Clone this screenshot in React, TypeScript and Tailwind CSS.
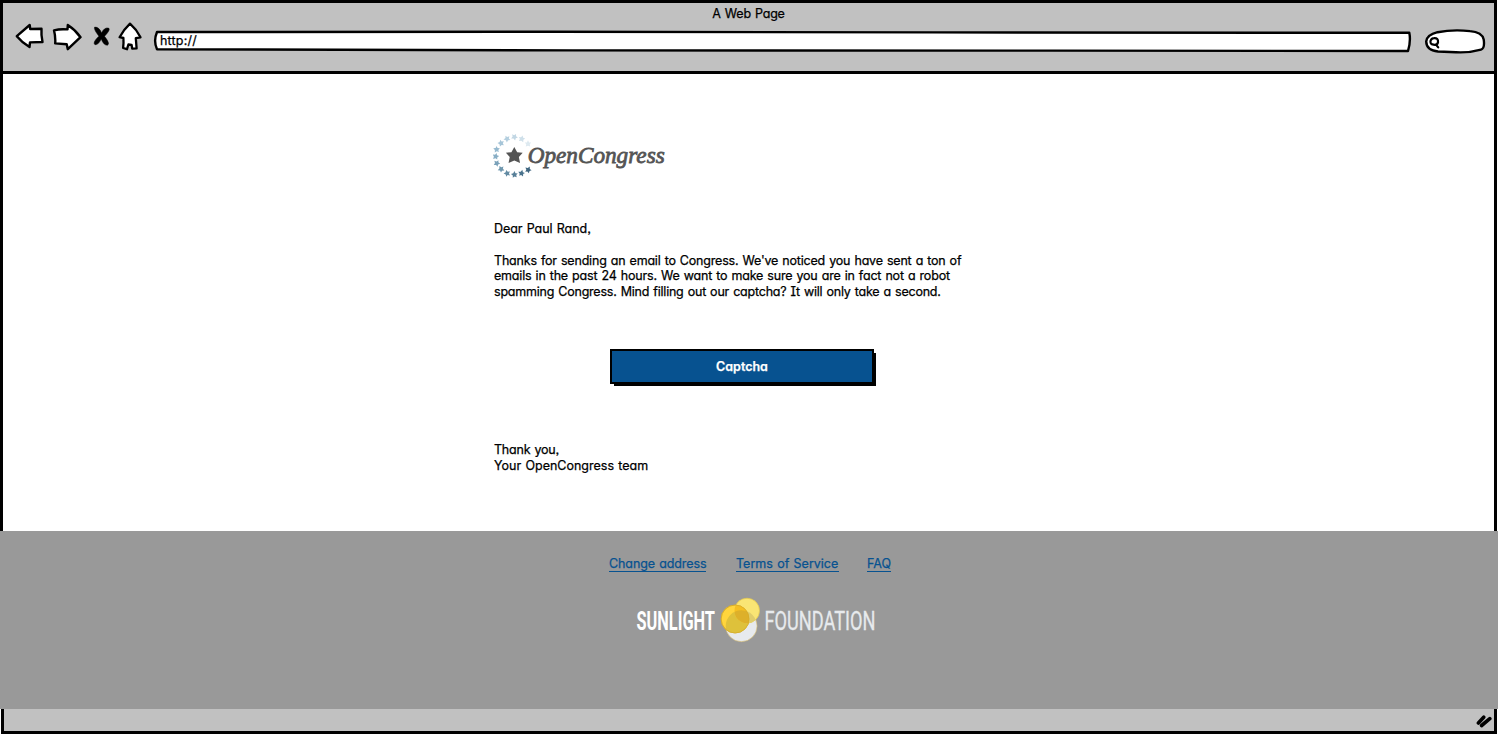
import type { ReactNode } from "react";

const sketchFont =
  "font-['Inter',sans-serif] [-webkit-text-stroke:0.25px_currentColor] [font-feature-settings:'cv11','ss03','cv08']";

function BackIcon() {
  return (
    <svg width="29" height="27" viewBox="0 0 29 27" fill="white" stroke="black" strokeWidth="2.4" strokeLinejoin="round">
      <path d="M1.8 13.2 L14.7 2 L15.2 6 L26.5 5.8 Q26 12 27.5 19 L15 19.4 L14.5 24 Q7 19.5 1.8 13.2Z" />
    </svg>
  );
}

function ForwardIcon() {
  return (
    <svg width="30" height="29" viewBox="0 0 30 29" fill="white" stroke="black" strokeWidth="2.4" strokeLinejoin="round">
      <path d="M2 7.3 Q8 5.7 15.5 6.4 L15.8 2 Q23.5 7 28.5 14.2 L15.8 26.2 L14.7 21.2 L3.2 20.4 Q3.7 14 2 7.3Z" />
    </svg>
  );
}

function StopIcon() {
  return (
    <svg width="18" height="21" viewBox="0 0 18 21" fill="black" stroke="black" strokeWidth=".5">
      <path d="M1.7 1.1 Q6.3 1 8.6 7 Q11 1.3 15.5 2 Q18.1 3.5 11.5 10.3 Q17.6 18 14.4 19.2 Q10.8 19.5 8.2 13 Q5.5 19 2 18.7 Q-0.9 16.5 5.9 10.2 Q0.2 2.8 1.7 1.1Z" />
    </svg>
  );
}

function HomeIcon() {
  return (
    <svg width="24" height="29" viewBox="0 0 24 29" fill="white" stroke="black" strokeWidth="2.3" strokeLinejoin="round">
      <path d="M12 1.7 Q5.4 8 1.6 15.2 L5.4 16 Q5.8 21 5.1 26 L9 27.2 L10.4 22.5 L13.6 22.8 L14.2 26.7 L18.6 26.3 L17.8 16.1 L22.5 15.3 Q18.4 7.3 12 1.7Z" />
    </svg>
  );
}

function AddressField() {
  return (
    <div className="relative h-[23px] w-[1260px]">
      <svg className="absolute inset-0" width="1260" height="23" viewBox="0 0 1260 23" fill="white" stroke="black" strokeWidth="2.4" strokeLinejoin="round">
        <path d="M4 2 L400 1.7 L780 2.4 L1256.3 2.8 Q1258 11 1255 21 L900 20.6 L420 20.4 L4 19.2 Q0.2 11 4 2Z" />
      </svg>
      <span className={`absolute left-[7px] top-[3px] text-[12.5px] leading-4 tracking-[0.2px] ${sketchFont}`}>http://</span>
    </div>
  );
}

function SearchField() {
  return (
    <svg width="62" height="27" viewBox="0 0 62 27" fill="white" stroke="black" strokeWidth="2.4" strokeLinejoin="round" strokeLinecap="round">
      <path d="M13.5 4.2 Q29 1.2 46 3.1 Q58 4 59.7 11.4 Q61 20.6 57 21.6 Q45 25 32 24.3 L14 23.5 Q2.4 22.2 2.2 13.5 Q3 6.7 13.5 4.2Z" />
      <path d="M10 10.2 Q14.5 9.8 14 14.4 Q13.2 17.4 9.5 16.7 Q5.6 16 6.6 12.6 Q7.7 10.2 10 10.2ZM12.2 16.8 L14.2 19.4" strokeWidth="2.2" />
    </svg>
  );
}

function Chrome() {
  return (
    <header className="mr-px flex h-[74px] flex-col border-x-[3px] border-y-[3px] border-black bg-[#c1c1c1]">
      <div className={`flex h-[22px] items-center justify-center text-[12.5px] leading-4 tracking-[-0.2px] [word-spacing:0.8px] ${sketchFont}`}>
        A Web Page
      </div>
      <div className="flex items-start">
        <div className="ml-[12px] -mt-[2px]"><BackIcon /></div>
        <div className="ml-[8px] -mt-[2px]"><ForwardIcon /></div>
        <div className="ml-[11px] mt-[1px]"><StopIcon /></div>
        <div className="ml-[7px] -mt-[3px]"><HomeIcon /></div>
        <div className="ml-[11px] mt-[5px]"><AddressField /></div>
        <div className="ml-[11px] mt-[3px]"><SearchField /></div>
      </div>
    </header>
  );
}

const star = "M0 -3.5 L1.2 -1.3 L3.5 -1.1 L1.9 0.7 L2.4 3.2 L0 2.2 L-2.4 3.2 L-1.9 0.7 L-3.5 -1.1 L-1.2 -1.3Z";

const ringStars = [
  { x: 35, y: 10.6, color: "#dde9f0" },
  { x: 28.8, y: 5.7, color: "#cfe0ea" },
  { x: 21.5, y: 3.8, color: "#c2d7e4" },
  { x: 14.2, y: 5.7, color: "#b4cfdf" },
  { x: 8.2, y: 10.1, color: "#a6c5d8" },
  { x: 3.8, y: 16.4, color: "#96bad0" },
  { x: 2.9, y: 23.4, color: "#88aec5" },
  { x: 4, y: 30.3, color: "#7ba2ba" },
  { x: 8.3, y: 36.2, color: "#6f97ae" },
  { x: 14.3, y: 40.5, color: "#638ba3" },
  { x: 21.6, y: 41.8, color: "#577f98" },
  { x: 28.6, y: 40.5, color: "#4a738d" },
  { x: 35.2, y: 37, color: "#3f6680" },
];

function OpenCongressLogo() {
  return (
    <svg width="176" height="48" viewBox="0 0 176 48">
      {ringStars.map((s, i) => (
        <path key={s.color} d={star} fill={s.color} transform={`translate(${s.x} ${s.y}) rotate(${i * 14}) scale(.93)`} />
      ))}
      <path d={star} fill="#545454" transform="translate(21.3 22.3) scale(2.4)" />
      <text x="34.7" y="30.4" textLength="137" lengthAdjust="spacingAndGlyphs" className="fill-[#545454] stroke-[#545454] stroke-[0.8px] font-['Liberation_Serif',serif] text-[23.5px] italic">
        OpenCongress
      </text>
    </svg>
  );
}

function SunlightLogo() {
  return (
    <svg width="300" height="46" viewBox="0 0 300 46">
      <text x="0.5" y="32.7" textLength="78.5" lengthAdjust="spacingAndGlyphs" className="fill-white font-['Roboto',sans-serif] text-[26px] font-bold">SUNLIGHT</text>
      <circle cx="105.4" cy="29" r="15.7" fill="#e7eaed" stroke="#d6bb69" strokeWidth=".6" />
      <circle cx="111" cy="13.7" r="12.5" fill="#f9e574" stroke="#e6c849" strokeWidth=".7" />
      <circle cx="99.1" cy="22" r="14" fill="#ffd53c" stroke="#d7ae2a" strokeWidth=".7" />
      <clipPath id="front"><circle cx="99.1" cy="22" r="14" /></clipPath>
      <clipPath id="base"><circle cx="105.4" cy="29" r="15.7" /></clipPath>
      <circle cx="105.4" cy="29" r="15.7" fill="#dec13b" clipPath="url(#front)" />
      <circle cx="111" cy="13.7" r="12.5" fill="#e0cd6b" clipPath="url(#base)" />
      <g clipPath="url(#front)">
        <circle cx="111" cy="13.7" r="12.5" fill="#f4bf23" />
        <circle cx="111" cy="13.7" r="12.5" fill="#ddb02a" clipPath="url(#base)" />
      </g>
      <circle cx="99.1" cy="22" r="14" fill="none" stroke="#d1a72a" strokeWidth=".6" />
      <text x="128.5" y="32.7" textLength="111" lengthAdjust="spacingAndGlyphs" className="fill-[#e7eaed] stroke-[#e7eaed] stroke-[0.3px] font-['Roboto',sans-serif] text-[26px] font-normal">FOUNDATION</text>
    </svg>
  );
}

function FooterLink({ children, className }: { children: ReactNode; className: string }) {
  return (
    <a href="#" className={`h-[17px] whitespace-nowrap border-b border-[#075290] text-[#075290] ${className}`}>
      {children}
    </a>
  );
}

export default function App() {
  return (
    <div className="flex h-[734px] w-[1498px] flex-col overflow-hidden bg-white text-black">
      <Chrome />
      <main className={`mr-px flex h-[457px] flex-col border-l-[3px] border-r-[3px] border-black pl-[490px] text-[12.5px] leading-4 [word-spacing:0.8px] ${sketchFont}`}>
        <div className="mt-[59px] h-[48px]"><OpenCongressLogo /></div>
        <p className="mt-[40px] ml-px h-4 whitespace-nowrap tracking-[-0.05px]">Dear Paul Rand,</p>
        <div className="mt-[16px] ml-px flex h-[48px] flex-col whitespace-nowrap">
          <span className="h-[15px] tracking-[-0.19px]">Thanks for sending an email to Congress. We've noticed you have sent a ton of</span>
          <span className="h-4 tracking-[-0.185px]">emails in the past 24 hours. We want to make sure you are in fact not a robot</span>
          <span className="h-4 tracking-[-0.215px]">spamming Congress. Mind filling out our captcha? It will only take a second.</span>
        </div>
        <button className="mt-[48px] ml-[117px] h-[35px] w-[264px] shrink-0 border-2 border-black bg-[#075290] pt-px text-[12.5px] font-semibold text-white shadow-[3px_3px_0_-1px_#000]">
          Captcha
        </button>
        <div className="mt-[58px] ml-px flex flex-col whitespace-nowrap">
          <span className="tracking-[-0.2px]">Thank you,</span>
          <span>Your OpenCongress team</span>
        </div>
      </main>
      <footer className={`flex h-[178px] flex-col bg-[#999999] text-[12.5px] leading-[17px] [word-spacing:0.8px] ${sketchFont}`}>
        <nav className="mt-[24px] ml-[609px] flex">
          <FooterLink className="w-[97px] tracking-[-0.1px]">Change address</FooterLink>
          <FooterLink className="ml-[30px] w-[103px]">Terms of Service</FooterLink>
          <FooterLink className="ml-[28px] w-[24px]">FAQ</FooterLink>
        </nav>
        <div className="mt-[25px] ml-[636px] [-webkit-text-stroke:0px] [word-spacing:0px]"><SunlightLogo /></div>
      </footer>
      <div className="mr-px ml-px flex h-[25px] justify-end border-x-[3px] border-b-[3px] border-black bg-[#c1c1c1] pt-[5px] pr-px">
        <svg width="17" height="15" viewBox="0 0 17 15" stroke="black" strokeWidth="3.6" strokeLinecap="round">
          <path d="M2.4 9 L7.7 3.2 M5.6 11.5 L13.8 4.6" />
        </svg>
      </div>
    </div>
  );
}
